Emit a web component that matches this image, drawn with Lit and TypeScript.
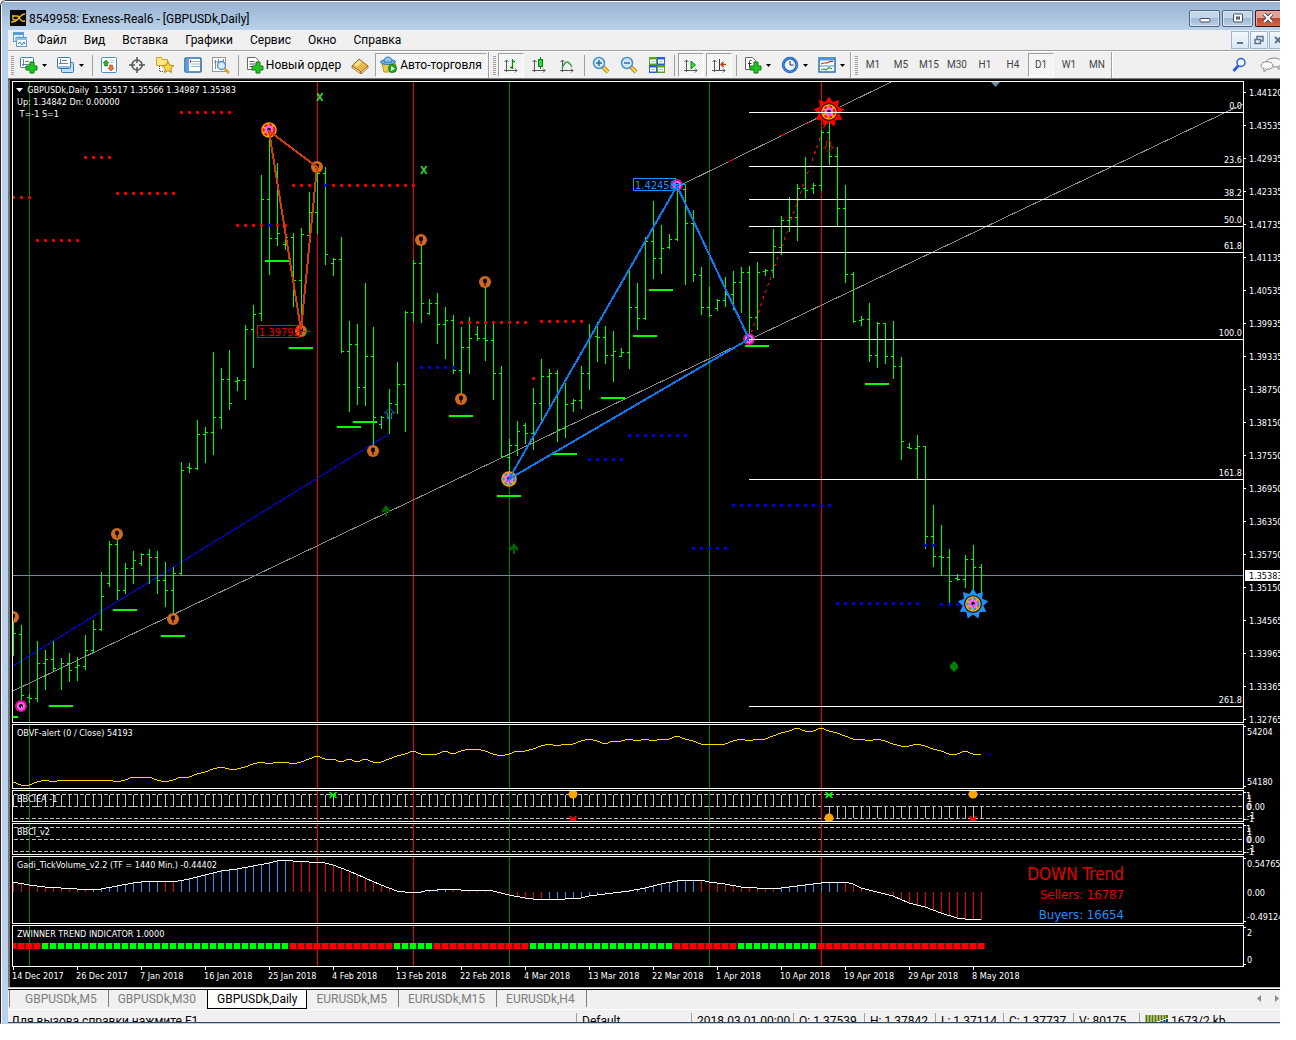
import { LitElement, html, svg, css, nothing } from "lit";
import type { SVGTemplateResult, TemplateResult } from "lit";
import { customElement, property, state } from "lit/decorators.js";
import { classMap } from "lit/directives/class-map.js";

/* Bars are 8px apart; the first one stands at x = 13 of the chart canvas. */
const barX = (k: number): number => 13 + 8 * k;

/* High, low, open, close of every daily bar, in canvas rows. */
const BARS: number[][] = [
  [618, 656, 633, 633], [625, 700, 634, 695], [694, 703, 697, 698], [641, 702, 698, 663],
  [650, 690, 663, 659], [641, 672, 659, 668], [658, 690, 668, 663], [653, 682, 663, 670],
  [657, 681, 667, 665], [635, 670, 666, 650], [620, 653, 650, 629], [572, 631, 629, 596],
  [541, 587, 583, 544], [537, 600, 544, 590], [563, 594, 590, 568], [551, 584, 568, 560],
  [553, 566, 563, 554], [549, 584, 554, 557], [551, 594, 557, 580], [562, 607, 580, 590],
  [567, 613, 590, 573], [462, 575, 573, 470], [463, 473, 467, 468], [420, 470, 468, 434],
  [427, 463, 434, 432], [352, 455, 432, 417], [368, 429, 417, 379], [350, 410, 379, 403],
  [377, 391, 381, 380], [325, 400, 380, 329], [305, 368, 329, 314], [175, 321, 313, 199],
  [130, 275, 199, 238], [163, 246, 238, 233], [238, 250, 244, 237], [233, 307, 237, 280],
  [228, 327, 280, 234], [192, 238, 235, 212], [167, 234, 212, 173], [167, 265, 173, 254],
  [258, 276, 263, 259], [237, 353, 259, 351], [321, 412, 351, 344], [324, 405, 344, 387],
  [283, 406, 387, 356], [327, 445, 356, 417], [416, 429, 424, 417], [389, 434, 417, 403],
  [362, 414, 404, 384], [311, 432, 384, 312], [260, 322, 312, 263], [242, 323, 263, 303],
  [299, 315, 313, 303], [293, 344, 303, 324], [307, 359, 324, 320], [315, 374, 320, 370],
  [327, 395, 370, 347], [317, 374, 347, 338], [326, 341, 334, 338], [283, 361, 338, 340],
  [323, 400, 340, 373], [366, 457, 373, 456], [439, 475, 457, 445], [421, 456, 445, 431],
  [423, 444, 425, 433], [388, 450, 433, 403], [359, 422, 403, 376], [369, 406, 376, 373],
  [370, 442, 373, 429], [383, 438, 428, 404], [399, 412, 403, 400], [366, 409, 400, 373],
  [324, 390, 373, 336], [322, 362, 336, 337], [326, 364, 337, 355], [331, 382, 355, 351],
  [348, 357, 356, 352], [270, 369, 352, 307], [283, 330, 307, 318], [237, 320, 318, 241],
  [201, 279, 241, 258], [225, 274, 258, 248], [234, 249, 247, 239], [187, 241, 239, 189],
  [185, 285, 189, 223], [210, 282, 223, 274], [267, 315, 275, 307], [287, 317, 307, 315],
  [299, 311, 308, 300], [277, 307, 300, 294], [271, 310, 294, 282], [267, 313, 282, 272],
  [266, 337, 272, 317], [262, 330, 317, 272], [269, 276, 271, 270], [229, 278, 270, 246],
  [216, 255, 247, 220], [197, 232, 220, 217], [184, 241, 217, 188], [157, 199, 188, 190],
  [183, 194, 188, 185], [130, 191, 185, 132], [112, 165, 132, 156], [147, 226, 156, 208],
  [185, 283, 208, 274], [272, 323, 274, 321], [316, 326, 320, 319], [303, 362, 319, 355],
  [322, 368, 355, 323], [323, 364, 323, 356], [321, 379, 356, 366], [357, 460, 366, 441],
  [443, 449, 447, 448], [435, 479, 448, 446], [446, 549, 446, 536], [505, 567, 536, 556],
  [525, 576, 556, 557], [549, 603, 557, 581], [574, 581, 578, 579], [555, 588, 579, 559],
  [545, 597, 559, 567], [564, 593, 567, 575],
];

const barsPath = BARS.map(([hi, lo, open, close], k) => {
  const x = barX(k);
  return `M${x} ${hi}h1v${lo - hi}h-1zM${x - 2} ${open}h2v1h-2zM${x + 1} ${close}h2v1h-2z`;
}).join("");

/* Vertical period separators: canvas x and colour. */
const PERIODS: [number, string][] = [
  [29, "#008000"], [317, "#f00000"], [413, "#f00000"],
  [509, "#008000"], [709, "#008000"], [821, "#f00000"],
];

const FIB: [string, number][] = [
  ["0.0", 112], ["23.6", 166], ["38.2", 199], ["50.0", 226],
  ["61.8", 252], ["100.0", 339], ["161.8", 479], ["261.8", 706],
];

/* Runs of level dots: first x, last x, y, colour. */
const DOTS: [number, number, number, string][] = [
  [13, 29, 197, "red"], [85, 109, 157, "red"], [117, 173, 193, "red"], [37, 77, 240, "red"],
  [181, 229, 112, "red"], [237, 261, 225, "red"], [269, 269, 225, "blue"], [277, 285, 225, "red"],
  [293, 309, 185, "red"], [325, 325, 185, "blue"], [333, 413, 185, "red"], [461, 525, 322, "red"],
  [541, 581, 321, "red"], [533, 533, 378, "red"], [421, 453, 367, "blue"], [629, 685, 435, "blue"],
  [589, 621, 459, "blue"], [693, 725, 548, "blue"], [733, 829, 505, "blue"], [837, 917, 603, "blue"],
  [941, 965, 604, "blue"], [925, 933, 545, "blue"],
];

const DASHES: [number, number][] = [
  [265, 260], [289, 347], [337, 426], [353, 421], [113, 609], [161, 635], [49, 705], [449, 415],
  [633, 335], [649, 289], [601, 397], [553, 453], [745, 345], [865, 383], [497, 495], [-7, 716],
];

const PRICES = [
  "1.44120", "1.43535", "1.42935", "1.42335", "1.41735", "1.41135", "1.40535", "1.39935", "1.39335",
  "1.38750", "1.38150", "1.37550", "1.36950", "1.36350", "1.35750", "1.35150", "1.34565", "1.33965",
  "1.33365", "1.32765",
];

const DATES = [
  "14 Dec 2017", "26 Dec 2017", "7 Jan 2018", "16 Jan 2018", "25 Jan 2018", "4 Feb 2018",
  "13 Feb 2018", "22 Feb 2018", "4 Mar 2018", "13 Mar 2018", "22 Mar 2018", "1 Apr 2018",
  "10 Apr 2018", "19 Apr 2018", "29 Apr 2018", "8 May 2018",
];

/* On-balance volume, one canvas row per bar. */
const OBV = [
  782, 785, 785, 782, 780, 782, 780, 780, 780, 780, 780, 780, 780, 782, 780, 777, 777, 777, 780, 782,
  780, 777, 777, 774, 772, 769, 767, 769, 769, 767, 764, 762, 764, 762, 762, 764, 762, 759, 756, 759,
  759, 762, 759, 762, 759, 762, 762, 759, 756, 754, 751, 754, 754, 754, 751, 754, 751, 749, 749, 751,
  754, 756, 754, 751, 751, 749, 746, 744, 746, 744, 744, 741, 739, 741, 744, 741, 741, 739, 741, 739,
  741, 739, 739, 736, 739, 741, 744, 744, 744, 744, 741, 739, 741, 739, 739, 736, 733, 731, 728, 731,
  731, 728, 731, 733, 736, 739, 739, 741, 739, 741, 744, 746, 746, 744, 746, 749, 751, 754, 754, 751,
  754, 754,
];

/* Knots of the tick volume curve; rows between knots are interpolated. */
const TICK: [number, number][] = [
  [13, 882], [29, 885], [45, 887], [61, 888], [77, 889], [101, 889], [117, 886], [133, 883], [149, 881],
  [165, 881], [173, 882], [189, 879], [205, 875], [221, 871], [237, 869], [253, 866], [269, 863],
  [277, 861], [285, 860], [293, 861], [309, 862], [321, 862], [333, 865], [349, 871], [365, 878],
  [381, 885], [389, 888], [397, 891], [405, 892], [421, 892], [429, 890], [437, 890], [445, 889],
  [453, 889], [461, 890], [485, 890], [493, 891], [501, 893], [509, 895], [525, 898], [533, 899],
  [565, 899], [581, 898], [589, 896], [605, 894], [621, 892], [629, 891], [645, 888], [661, 884],
  [677, 881], [685, 880], [701, 880], [709, 882], [725, 884], [741, 887], [757, 888], [781, 888],
  [789, 887], [805, 885], [821, 883], [829, 882], [845, 882], [853, 884], [861, 888], [869, 890],
  [877, 892], [893, 896], [909, 903], [925, 907], [941, 913], [957, 918], [965, 919], [973, 919],
  [981, 920],
];

const tickAt = (x: number): number => {
  for (let i = 1; i < TICK.length; i++) {
    const [x0, y0] = TICK[i - 1];
    const [x1, y1] = TICK[i];
    if (x <= x1) return Math.round(y0 + ((y1 - y0) * (x - x0)) / (x1 - x0));
  }
  return 892;
};

const BUY_RANGES = [[93, 157], [181, 285], [421, 445], [549, 693], [781, 837]];
const UP_RANGES = [[45, 285], [397, 429], [533, 669], [741, 813]];
const inside = (ranges: number[][], x: number): boolean => ranges.some(([a, b]) => x >= a && x <= b);

const pointer = (x: number, y: number) => svg`
  <g>
    <circle cx=${x} cy=${y} r="6" fill="#d2691e"></circle>
    <ellipse cx=${x} cy=${y - 1} rx="2" ry="2.4" fill="#000"></ellipse>
    <path d="M${x - 0.5} ${y}h1v4h-1z" fill="#000"></path>
  </g>`;

const magenta = (x: number, y: number) => svg`
  <g>
    <circle cx=${x} cy=${y} r="6" fill="#c71585"></circle>
    <circle cx=${x} cy=${y} r="3" fill="#000" stroke="#ff5cff" stroke-width="2"></circle>
    <path d="M${x} ${y}h1v5h-1z" fill="#ff5cff"></path>
  </g>`;

const target = (x: number, y: number, accent: string) => svg`
  <g>
    <circle cx=${x} cy=${y} r="7.800" fill="#ffa500"></circle>
    <circle cx=${x} cy=${y} r="5.400" fill="none" stroke=${accent} stroke-width="2" stroke-dasharray="3 2"></circle>
    <circle cx=${x} cy=${y - 0.5} r="3" fill="#000" stroke="#ff5cff" stroke-width="2.400"></circle>
    <path d="M${x} ${y}h1v4h-1z" fill="#7060ff"></path>
  </g>`;

const sun = (x: number, y: number, color: string) => {
  const pts: string[] = [];
  for (let i = 0; i < 18; i++) {
    const r = i % 2 ? 10.5 : 15.5;
    const a = (i * Math.PI) / 9 - Math.PI / 2;
    pts.push(`${(x + r * Math.cos(a)).toFixed(1)},${(y + r * Math.sin(a)).toFixed(1)}`);
  }
  return svg`
    <polygon points=${pts.join(" ")} fill=${color}></polygon>
    <circle cx=${x} cy=${y} r="8.800" fill="#000"></circle>
    ${target(x, y, color)}`;
};

const periodLines = (top: number, height: number) =>
  PERIODS.map(([x, color]) => svg`<rect x=${x} y=${top} width="1" height=${height} fill=${color}></rect>`);

const priceMarks = () => svg`
  ${periodLines(82, 640)}
  <g class="crisp">
    <path d="M13 691L1243 104M677 187L891 82" stroke="#8c8c8c" fill="none"></path>
    <path d="M13 666L389 434" stroke="#0000ff" fill="none"></path>
    <path d="M749 339L829 113" stroke="#ff0000" stroke-dasharray="3 4" fill="none"></path>
    <path d="M728 162l6 -3M780 136l5 -2M806 124l4 -2" stroke="#ff0000" fill="none"></path>
    <rect x="13" y="575" width="100%" height="1" fill="#778899"></rect>
    <path d=${barsPath} fill="#00ff00"></path>
  </g>
  ${DOTS.map(([from, to, y, color]) => {
    const out: SVGTemplateResult[] = [];
    for (let x = from; x <= to; x += 8) {
      out.push(svg`<rect x=${x - 1} y=${y - 1} width="3" height="3" rx="1" fill=${color}></rect>`);
    }
    return out;
  })}
  ${DASHES.map(([x, y]) => svg`<rect x=${x} y=${y} width=${x < 0 ? 25 : 24} height="2" fill="#00ff00"></rect>`)}
  ${[[13, 617], [117, 534], [173, 619], [317, 167], [301, 331], [373, 451], [421, 240], [461, 399], [485, 282]]
    .map(([x, y]) => pointer(x, y))}
  ${[[21, 706], [677, 185], [749, 339]].map(([x, y]) => magenta(x, y))}
  ${target(269, 130, "#ff0000")}
  ${target(509, 479, "#1e90ff")}
  ${sun(829, 112, "#ff0000")}
  ${sun(973, 604, "#1e90ff")}
  <text x="259" y="336" class="tag" fill="#ee0000">1.39792</text>
  <rect x="257.5" y="325.5" width="42" height="12" fill="none" stroke="#ff0000"></rect>
  <path d="M300 331.5h10" stroke="#ff0000"></path>
  <text x="635" y="189" class="tag" fill="#1e90ff">1.42458</text>
  <rect x="633.5" y="178.5" width="42" height="12" fill="none" stroke="#1e90ff"></rect>
  <path d="M676 184.5h10" stroke="#1e90ff"></path>
  <g class="crisp" fill="none" stroke-width="2">
    <path d="M269 131L317 167L301 330Z" stroke="#d23c08"></path>
    <path d="M509 479L677 186L749 339Z" stroke="#0a78ee"></path>
  </g>
  <g font-size="11" font-weight="bold" fill="#32cd32">
    <text x="316" y="101">X</text>
    <text x="420" y="174">X</text>
  </g>
  <path d="M389.500 408l5 5h-3v6h-4v-6h-3z" fill="none" stroke="#1473d8"></path>
  <path d="M826.500 141h4v6h3l-5 5l-5 -5h3z" fill="none" stroke="#c00000"></path>
  ${[[386, 505], [514, 543]].map(([x, y]) => svg`
    <path d="M${x} ${y}l4 5v3l-3 -2v5h-2v-5l-3 2v-3z" fill="#006400"></path>`)}
  <path d="M954 661l4 4v3l-4 4l-4 -4v-3z" fill="#008000"></path>
  <path d="M991 82h9l-4.500 5z" fill="#778899"></path>
  ${FIB.map(([, y]) => svg`<rect x="749" y=${y} width="100%" height="1" fill="#fff"></rect>`)}
  <path d="M16 88h7l-3.500 4z" fill="#fff"></path>`;

const cross = (x: number, y: number, color: string) => svg`
  <path d="M${x - 3.5} ${y - 3}l7 6M${x + 3.5} ${y - 3}l-7 6M${x - 3} ${y}h6" stroke=${color} stroke-width="1.600" fill="none"></path>`;

const dashedRow = (y: number) => svg`
  <path d="M14 ${y}.5H3000" stroke="#c0c0c0" stroke-dasharray="4 2"></path>`;

const signalMarks = () => svg`
  ${dashedRow(794)}${dashedRow(806)}${dashedRow(818)}
  ${BARS.map((_, k) => svg`
    <rect x=${barX(k)} y=${k < 102 ? 795 : 807} width="1" height="11" fill="#c0c0c0"></rect>
    <rect x=${barX(k) - 1} y="806" width="2" height="1" fill="#c0c0c0"></rect>`)}
  ${periodLines(791, 30)}
  ${[[573, 794], [829, 818], [973, 794]].map(([x, y]) => svg`<circle cx=${x} cy=${y} r="4.500" fill="#ffa500"></circle>`)}
  ${cross(333, 795, "#00ff00")}${cross(829, 795, "#00ff00")}
  ${cross(573, 819, "#ff0000")}${cross(973, 819, "#ff0000")}`;

const tickMarks = () => svg`
  ${periodLines(857, 66)}
  ${BARS.map((_, k) => {
    const x = barX(k);
    const y = tickAt(x);
    return svg`<rect x=${x} y=${Math.min(y, 892)} width="1" height=${Math.max(1, Math.abs(892 - y))}
      fill=${inside(BUY_RANGES, x) ? "#1e90ff" : "#f00000"}></rect>`;
  })}
  <polyline class="crisp" points=${TICK.map((p) => p.join(",")).join(" ")} fill="none" stroke="#ffffff"></polyline>`;

const trendMarks = () => svg`
  ${periodLines(926, 40)}
  ${BARS.map((_, k) => {
    const x = barX(k);
    const up = inside(UP_RANGES, x);
    return svg`
      <rect x=${x - 4} y="943" width="8" height="6" fill=${up ? "#003800" : "#800000"}></rect>
      <rect x=${x - 3} y="943" width="6" height="6" fill=${up ? "#00ff00" : "#ff0000"}></rect>`;
  })}`;

interface AxisLabel { text: string; y: number; x?: number; tick?: boolean; }

interface PanelData {
  name: string;
  top: number;
  height: number;
  title: string[];
  marks: () => unknown;
  axis: AxisLabel[];
}

const signalAxis = (mid: number): AxisLabel[] => [
  { text: "1", y: mid - 11, x: 2, tick: true }, { text: "1", y: mid - 8, x: 3 },
  { text: "0.00", y: mid, x: 3 }, { text: "0", y: mid, x: 2 },
  { text: "-1", y: mid + 9, x: 3 }, { text: "-1", y: mid + 12, x: 2, tick: true },
];

const PANELS: PanelData[] = [
  {
    name: "GBPUSDk,Daily", top: 82, height: 640,
    title: ["    GBPUSDk,Daily  1.35517 1.35566 1.34987 1.35383", "Up: 1.34842 Dn: 0.00000", " T=-1 S=1"],
    marks: priceMarks,
    axis: PRICES.map((text, i) => ({ text, y: 92 + 33 * i, tick: true })),
  },
  {
    name: "OBVF-alert", top: 725, height: 63, title: ["OBVF-alert (0 / Close) 54193"],
    marks: () => svg`${periodLines(725, 63)}
      <polyline class="crisp" fill="none" stroke="#ffd700" points=${OBV.map((y, k) => `${barX(k)},${y}`).join(" ")}></polyline>`,
    axis: [{ text: "54204", y: 731, x: 3, tick: true }, { text: "54180", y: 781, x: 3, tick: true }],
  },
  { name: "BBCIEA", top: 791, height: 30, title: ["BBCIEA -1"], marks: signalMarks, axis: signalAxis(806) },
  {
    name: "BBCI_v2", top: 824, height: 30, title: ["BBCI_v2"],
    marks: () => svg`${dashedRow(827)}${dashedRow(839)}${dashedRow(851)}${periodLines(824, 30)}`,
    axis: signalAxis(839),
  },
  {
    name: "Gadi_TickVolume", top: 857, height: 66, title: ["Gadi_TickVolume_v2.2 (TF = 1440 Min.) -0.44402"],
    marks: tickMarks,
    axis: [{ text: "0.54765", y: 863, x: 3, tick: true }, { text: "0.00", y: 892, x: 3 }, { text: "-0.49124", y: 916, x: 3, tick: true }],
  },
  {
    name: "ZWINNER", top: 926, height: 40, title: ["ZWINNER TREND INDICATOR 1.0000"], marks: trendMarks,
    axis: [{ text: "2", y: 932, x: 3, tick: true }, { text: "0", y: 959, x: 3, tick: true }],
  },
];

@customElement("chart-panel")
export class ChartPanel extends LitElement {
  @property({ attribute: false }) data!: PanelData;

  static styles = css`
    :host { display: flex; font: 9px/12px "DejaVu Sans Condensed", "DejaVu Sans", sans-serif; color: #fff; }
    .plot { position: relative; flex: 1; min-width: 0; border: 1px solid #fff; }
    svg { display: block; }
    .canvas { width: 100%; overflow: hidden; }
    .crisp { shape-rendering: crispEdges; }
    .tag { font-size: 11px; }
    .axis { flex: none; width: 36px; fill: #fff; }
    .title { position: absolute; left: 4px; top: 2px; white-space: pre; }
    .fib { position: absolute; right: 1px; line-height: 10px; }
    .trend { position: absolute; right: 119px; top: 6px; text-align: right; color: #e60000; }
    .trend-main { font: 17px/22px "DejaVu Sans Condensed", sans-serif; }
    .trend-row { font: 13px/20px "DejaVu Sans Condensed", sans-serif; }
    .buy { color: #1e90ff; }
  `;

  render() {
    const { name, top, height, title, marks, axis } = this.data;
    const main = top === 82;
    return html`
      <div class="plot">
        <svg class="canvas" height=${height} role="img" aria-label=${name}>
          <g transform="translate(-13 ${-top})">${marks()}</g>
        </svg>
        <div class="title">${title.map((line) => html`<div>${line}</div>`)}</div>
        ${main ? FIB.map(([label, y]) => html`<span class="fib" style="top:${y - top - 11}px">${label}</span>`) : nothing}
        ${name === "Gadi_TickVolume" ? html`
          <div class="trend">
            <div class="trend-main">DOWN Trend</div>
            <div class="trend-row">Sellers: 16787</div>
            <div class="trend-row buy">Buyers: 16654</div>
          </div>` : nothing}
      </div>
      <svg class="axis" height=${height + 2} overflow="visible">
        <g transform="translate(0 ${1 - top})">
          ${axis.map((a, i) => svg`
            ${a.tick ? svg`<rect x="0" y=${main ? a.y : i === 0 ? top + 1 : top + height - 2} width="2" height="1"></rect>` : nothing}
            <text x=${a.x ?? 5} y=${a.y + 4}>${a.text}</text>`)}
          ${main ? svg`
            <rect x="1" y="570" width="35" height="11" fill="#fff"></rect>
            <text x="5" y="579" fill="#000">1.35383</text>` : nothing}
        </g>
      </svg>`;
  }
}

/* ---- Toolbar pictures, each on an 18px grid ---- */
const pic = (body: SVGTemplateResult): TemplateResult =>
  html`<svg width="18" height="18" viewBox="0 0 18 18" aria-hidden="true">${body}</svg>`;

const plus = svg`<path d="M10 6h4v4h3v4h-3v3h-4v-3h-4v-4h4z" fill="#22c522" stroke="#0c7d10"></path>`;
const axes = svg`<path d="M4.500 4v12M2 14.500h13M2.500 6l2 -2l2 2M13 12.500l2 2l-2 2" fill="none" stroke="#555"></path>`;
const handle = svg`<path d="M11 11l5 5" stroke="#b8860b" stroke-width="4"></path><path d="M11 11l5 5" stroke="#ffd75e" stroke-width="2"></path>`;
const lens = svg`<circle cx="7" cy="7" r="5.500" fill="#cfe8fb" stroke="#4a90c8" stroke-width="1.500"></circle>`;

const ICONS: Record<string, TemplateResult> = {
  newChart: pic(svg`<rect x=".5" y="1.500" width="13" height="10" rx="1" fill="#fff" stroke="#3b7dad"></rect>
    <path d="M3.500 3v7M2 8.500h8M5 5.500h4" stroke="#708090"></path>${plus}`),
  profiles: pic(svg`<rect x="4.500" y="6.500" width="12" height="10" rx="1" fill="#bfe0f6" stroke="#3b7dad"></rect>
    <rect x=".5" y="1.500" width="13" height="11" rx="1" fill="#fff" stroke="#3b7dad"></rect><path d="M1 11h12" stroke="#8fc1e4" stroke-width="2"></path>
    <path d="M3.500 3v5M2 7.500h9M5 4.500h5" stroke="#708090"></path>`),
  market: pic(svg`<rect x="1.500" y="1.500" width="15" height="15" rx="1" fill="#fff" stroke="#4a90c8"></rect>
    <path d="M6 4l3 3h-1.500v3h-3v-3h-1.500z" fill="#2fae2f" stroke="#0c7d10" stroke-width=".6"></path>
    <path d="M11 15l-3 -3h1.500v-3h3v3h1.500z" fill="#f07040" stroke="#c03a10" stroke-width=".6"></path><path d="M10 4.500h4M10 6.500h4" stroke="#bcd"></path>`),
  crosshair: pic(svg`<circle cx="9" cy="9" r="5" fill="none" stroke="#555" stroke-width="1.500"></circle>
    <path d="M9 1v6M9 11v6M1 9h6M11 9h6" stroke="#555" stroke-width="1.500"></path>`),
  navigator: pic(svg`<path d="M.5 1.500h5l1 2h5v6h-11z" fill="#fbe58a" stroke="#c9a227"></path><path d="M3.500 10v5.500h4" fill="none" stroke="#555" stroke-dasharray="1 1"></path>
    <path d="M12 5.500l1.800 3.700l4 .5l-3 2.800l.8 4l-3.600 -2l-3.600 2l.8 -4l-3 -2.800l4 -.5z" fill="#ffd84a" stroke="#b8860b"></path>`),
  terminal: pic(svg`<rect x="1" y="2" width="16" height="14" rx="1" fill="#fff" stroke="#2a6fb0" stroke-width="1.600"></rect>
    <rect x="2" y="3" width="3" height="12" fill="#5ba3e0"></rect><path d="M7 5.500h9M7 8h9M7 10.500h9" stroke="#a0b8cc"></path><path d="M6.500 4v3" stroke="#e03030"></path>`),
  tester: pic(svg`<rect x=".5" y="1.500" width="13" height="14" fill="#fff" stroke="#999"></rect><path d="M3.500 4v9M6.500 3v5M11.500 3v5M2 6h10" stroke="#888"></path>
    <circle cx="9.500" cy="9.500" r="4" fill="#cfe8fb" fill-opacity=".85" stroke="#4a90c8" stroke-width="1.300"></circle><path d="M12.500 12.500l4.500 4.500" stroke="#d8a72a" stroke-width="2.500"></path>`),
  order: pic(svg`<path d="M1.500 1.500h8l3 3v9h-11z" fill="#fff" stroke="#666"></path><path d="M3.500 5.500h5M3.500 8h6M3.500 10.500h4" stroke="#555"></path>${plus}`),
  book: pic(svg`<path d="M1 10l7 -7l9 7l-7 6z" fill="#e9b84a" stroke="#96640f"></path><path d="M1 10v2l9 6v-2zM10 16v2l7 -6v-2z" fill="#fff0c4" stroke="#96640f" stroke-width=".8"></path><path d="M3 9l5 -5l3 2l-5 5z" fill="#ffdf8c"></path>`),
  auto: pic(svg`<path d="M2 8l2 8h8l4 -8z" fill="#f0c94c" stroke="#b8922a"></path><ellipse cx="8" cy="6" rx="7.500" ry="2.500" fill="#6cb3e6" stroke="#2f78b5"></ellipse>
    <path d="M4 6q0 -5 4 -5t4 5z" fill="#8ec9f2" stroke="#2f78b5"></path><circle cx="12.500" cy="12.500" r="4" fill="#16b316" stroke="#0a7f0a"></circle><path d="M11 10l4 2.500l-4 2.500z" fill="#fff"></path>`),
  bars: pic(svg`${axes}<path d="M10.500 3v10M8 11.500h2M11 5.500h2" stroke="#0a8a0a" stroke-width="1.300"></path>`),
  candles: pic(svg`${axes}<path d="M10.500 1v12" stroke="#0a8a0a"></path><rect x="8.500" y="3.500" width="4" height="7" fill="#35d048" stroke="#0a8a0a"></rect>`),
  line: pic(svg`${axes}<path d="M4 12q3 -6 5 -6q2 0 5 5" fill="none" stroke="#2ea043" stroke-width="1.400"></path>`),
  zoomIn: pic(svg`${handle}${lens}<path d="M4 7h6M7 4v6" stroke="#2a6fb0" stroke-width="1.500"></path>`),
  zoomOut: pic(svg`${handle}${lens}<path d="M4 7h6" stroke="#2a6fb0" stroke-width="1.500"></path>`),
  tile: pic(svg`<rect x="1" y="1" width="8" height="8" fill="#58a618"></rect><rect x="9" y="1" width="8" height="8" fill="#2a5fd8"></rect>
    <rect x="1" y="9" width="8" height="8" fill="#2a5fd8"></rect><rect x="9" y="9" width="8" height="8" fill="#58a618"></rect>
    <path d="M2 5.500h6M10 5.500h6M2 13.500h6M10 13.500h6" stroke="#fff" stroke-width="4"></path><path d="M3 5.500h4M11 5.500h4M3 13.500h4M11 13.500h4" stroke="#9cc"></path>`),
  scroll: pic(svg`${axes}<path d="M9 5l4.500 4l-4.500 4z" fill="#3ed14f" stroke="#0a8a0a"></path>`),
  shift: pic(svg`${axes}<path d="M9.500 3v11" stroke="#336"></path><path d="M16 8.500h-4M13.500 6l-2.500 2.500l2.500 2.500" fill="none" stroke="#c03a10" stroke-width="1.400"></path>`),
  indicators: pic(svg`<path d="M1.500 1.500h7l3 3v9h-10z" fill="#fff" stroke="#666"></path><path d="M7.500 4.500q-2 -1 -2 1v6M4 7.500h3.500" fill="none" stroke="#333"></path>${plus}`),
  clock: pic(svg`<circle cx="9" cy="9" r="6.800" fill="#e8f3fd" stroke="#1a5fb8" stroke-width="2.800"></circle><circle cx="9" cy="9" r="7" fill="none" stroke="#5aa8f0" stroke-width=".8"></circle><path d="M9 5v4h3.500" fill="none" stroke="#333"></path>`),
  template: pic(svg`<rect x="1" y="2" width="16" height="14" fill="#fff" stroke="#2a6fb0" stroke-width="1.500"></rect><path d="M1 3.500h16" stroke="#4a9ae0" stroke-width="2"></path>
    <path d="M2 10h14" stroke="#4a90c8"></path><path d="M3 8l3 -1l3 0l3 -1.500h3" fill="none" stroke="#b03020" stroke-width="1.200"></path><path d="M3 14l3 -1l2 1l3 -2.500l3 1.500" fill="none" stroke="#2f9a3a" stroke-width="1.200"></path>`),
};

const arrow = html`<svg width="5" height="3" viewBox="0 0 5 3" aria-hidden="true"><path d="M0 0h5l-2.500 3z" fill="#000"></path></svg>`;

const MENU = ["Файл", "Вид", "Вставка", "Графики", "Сервис", "Окно", "Справка"];
const PERIOD_NAMES = ["M1", "M5", "M15", "M30", "H1", "H4", "D1", "W1", "MN"];
const TABS = ["GBPUSDk,M5", "GBPUSDk,M30", "GBPUSDk,Daily", "EURUSDk,M5", "EURUSDk,M15", "EURUSDk,H4"];
const STATUS = ["Default", "2018.03.01 00:00", "O: 1.37539", "H: 1.37842", "L: 1.37114", "C: 1.37737", "V: 80175"];

@customElement("app-root")
export class AppRoot extends LitElement {
  @state() private period = "D1";
  @state() private tab = "GBPUSDk,Daily";

  static styles = css`
    :host { display: block; padding: 0 16px 16px 0; background: #fff; font: 12px/16px Roboto, "Noto Sans", sans-serif; color: #000; }
    * { box-sizing: border-box; }
    svg { display: block; flex: none; }
    button { margin: 0; padding: 0; border: 0; background: none; font: inherit; color: inherit; white-space: nowrap; }
    .window { display: flex; flex-direction: column; overflow: hidden; border-top: 1px solid #35343c; border-left: 1px solid #222; border-top-left-radius: 6px; background: #b9d1ea; border-bottom: 1px solid #b9d1ea; }
    .titlebar { display: flex; align-items: center; height: 29px; padding: 4px 0 0 8px; gap: 3px; border-top: 1px solid #fff; border-left: 1px solid #fff; background: linear-gradient(#98b3d2, #b9d1ea); }
    .caption { flex: 1; padding-top: 2px; }
    .caption-buttons { display: flex; gap: 2px; }
    .cap { display: grid; place-items: center; width: 31px; height: 17px; border: 1px solid #52657c; border-radius: 2px; box-shadow: inset 0 0 0 1px #d8e6f4; background: linear-gradient(#c3d6ea 45%, #a0bad6 50%, #b9d0e8); }
    .cap.close { width: 25px; border-color: #431422; border-right: 0; border-radius: 2px 0 0 2px; box-shadow: inset 1px 1px 0 #eda99b; background: linear-gradient(#e3a193 45%, #c0452c 50%, #cf6a4a); }
    .body { display: flex; flex-direction: column; margin-left: 6px; background: #f0f0f0; border-bottom: 1px solid #3d4a57; }
    .frame { border-left: 1px solid #fff; }
    .menubar { display: flex; align-items: center; gap: 1px; height: 21px; padding-left: 4px; border-bottom: 1px solid #a0a0a0; }
    .menubar .menu { padding: 0 8px; }
    .mdi { display: flex; gap: 1px; margin-left: auto; }
    .mdi-button { display: grid; place-items: center; width: 18px; height: 18px; border: 1px solid #9fb6cc; background: linear-gradient(#f2f8fd, #d8e8f5); }
    .mdi-button.last { width: 11px; border-right: 0; overflow: hidden; justify-items: end; }
    .toolbar { display: flex; align-items: center; height: 28px; padding-left: 3px; border-top: 1px solid #fff; border-bottom: 1px solid #808080; }
    .grip { width: 3px; height: 19px; margin-right: 1px; background: repeating-linear-gradient(#a0a0a0 0 1px, #f0f0f0 1px 2px); }
    .tool { display: flex; flex: none; align-items: center; justify-content: center; width: 28px; height: 24px; }
    .tool.split { width: 37px; gap: 4px; }
    .tool.label { width: auto; gap: 2px; padding: 0 4px; }
    .tool.order { width: 105px; }
    .tool.auto { width: 112px; margin: 0 1px; }
    .tool.pressed { border: 1px solid; border-color: #a0a0a0 #fff #fff #a0a0a0; background: repeating-conic-gradient(#fff 0 25%, #ececec 0 50%) 0 0 / 2px 2px; }
    .tool.icon.pressed, .tool.period.pressed { width: 26px; margin: 0 1px; }
    .period { font-size: 10px; color: #444; }
    .sep { flex: none; width: 1px; height: 21px; margin: 0 2px 0 3px; background: #a0a0a0; }
    .edge { flex: none; width: 2px; height: 26px; margin-right: 3px; border-left: 1px solid #a0a0a0; background: #fff; }
    .right-tools { display: flex; gap: 12px; margin-left: auto; }
    .workspace { padding: 1px 0 0 2px; border-top: 1px solid #222; border-left: 2px solid #747474; background: #000; }
    .panels { display: flex; flex-direction: column; gap: 1px; }
    .dates { width: 100%; height: 20px; overflow: hidden; fill: #fff; font: 9px "DejaVu Sans Condensed", "DejaVu Sans", sans-serif; }
    .tabs { display: flex; height: 23px; padding-left: 1px; border-top: 1px solid #bfb6bd; box-shadow: inset 0 1px #fff, inset 0 2px #000; background: #f0f0f0; border-bottom: 1px solid #fff; }
    .tab { display: flex; align-items: center; margin-top: 2px; height: 17px; color: #7c7c7c; padding: 0 11px 0 9px; border-right: 1px solid #7c7c7c; }
    .tab.first { padding-left: 15px; border-left: 1px solid #7c7c7c; }
    .tab.before { border-right: 0; }
    .tab.active { height: 19px; padding: 0 9px; border: 1px solid #000; border-top: 0; background: #fff; color: #000; }
    .scrollers { display: flex; align-items: center; gap: 14px; margin: 0 1px 0 auto; }
    .status { display: grid; grid-template-columns: minmax(0, 1fr) 115px 102px 71px 71px 68px 70px 66px 141px; height: 12px; overflow: hidden; padding-top: 3px; }
    .cell { display: flex; gap: 3px; height: 16px; padding-left: 5px; border-left: 1px solid #a0a0a0; white-space: nowrap; }
    .cell.hint { padding-left: 3px; border-left: 0; }
  `;

  private icon(name: string, label: string, kind = "icon", pressed = false) {
    return html`<button class=${classMap({ tool: true, [kind]: true, pressed })} aria-label=${label}>
      ${ICONS[name]}${kind === "split" ? arrow : nothing}</button>`;
  }

  private titlebar() {
    return html`
      <header class="titlebar">
        <svg width="16" height="16" viewBox="0 0 16 16" aria-hidden="true"><rect width="16" height="16" fill="#0a0a0a"></rect>
          <path d="M1 12q5 0 8 -4t6 -4M4 5q-3 5 1 5q3 0 5 -4M2 6h5q2 0 3 3t5 2" fill="none" stroke="#e8b418" stroke-width="1.300"></path></svg>
        <span class="caption">8549958: Exness-Real6 - [GBPUSDk,Daily]</span>
        <div class="caption-buttons">
          <button class="cap" aria-label="Свернуть"><svg width="12" height="10"><rect x="1" y="5.500" width="10" height="3.500" rx="1" fill="#fff" stroke="#444c5c"></rect></svg></button>
          <button class="cap" aria-label="Развернуть"><svg width="12" height="10"><rect x="1.500" y="1" width="9" height="8" rx="1" fill="#fff" stroke="#444c5c"></rect><rect x="4.500" y="4" width="3" height="2" fill="#88a" stroke="#444c5c"></rect></svg></button>
          <button class="cap close" aria-label="Закрыть"><svg width="12" height="10"><path d="M2 1l8 8M10 1l-8 8" stroke="#444c5c" stroke-width="4"></path><path d="M2 1l8 8M10 1l-8 8" stroke="#fff" stroke-width="2"></path></svg></button>
        </div>
      </header>`;
  }

  private menubar() {
    return html`
      <nav class="menubar">
        <svg width="16" height="16" viewBox="0 0 16 16" aria-hidden="true">
          <rect x="1.500" y=".5" width="10" height="9" fill="#e4f1fc" stroke="#5b9bd0"></rect><path d="M1 2h11" stroke="#5b9bd0" stroke-width="2"></path>
          <path d="M4 5v4M7 4v4" stroke="#5b9bd0"></path>
          <rect x="4.500" y="5.500" width="10" height="9" fill="#f4faff" stroke="#5b9bd0"></rect><path d="M4 7h11" stroke="#8fc1e4" stroke-width="2"></path>
          <path d="M6 12l2 -2l2 3l2 -3l1 2" fill="none" stroke="#3b7dad"></path></svg>
        ${MENU.map((m) => html`<button class="menu">${m}</button>`)}
        <div class="mdi">
          <button class="mdi-button" aria-label="Свернуть график"><svg width="10" height="10"><path d="M2 8h6" stroke="#5a738c" stroke-width="2"></path></svg></button>
          <button class="mdi-button" aria-label="Восстановить график"><svg width="10" height="10"><path d="M3 4V1.500h6V6H7" fill="none" stroke="#5a738c" stroke-width="1.500"></path><rect x="1" y="4.500" width="5.500" height="4" fill="none" stroke="#5a738c" stroke-width="1.500"></rect></svg></button>
          <button class="mdi-button last" aria-label="Закрыть график"><svg width="6" height="10"><path d="M1 2l6 6M7 2l-6 6" stroke="#5a738c" stroke-width="2"></path></svg></button>
        </div>
      </nav>`;
  }

  private toolbar() {
    const sep = html`<span class="sep"></span>`;
    return html`
      <div class="toolbar" role="toolbar" aria-label="Панель инструментов">
        <span class="grip"></span>
        ${this.icon("newChart", "Новый график", "split")}${this.icon("profiles", "Профили", "split")}${sep}
        ${this.icon("market", "Обзор рынка")}${this.icon("crosshair", "Окно данных")}${this.icon("navigator", "Навигатор")}
        ${this.icon("terminal", "Терминал")}${this.icon("tester", "Тестер стратегий")}${sep}
        <button class="tool label order">${ICONS.order}<span>Новый ордер</span></button>
        ${this.icon("book", "MetaEditor")}
        <button class="tool label auto pressed">${ICONS.auto}<span>Авто-торговля</span></button>
        <span class="edge"></span><span class="grip"></span>
        ${this.icon("bars", "Бары", "icon", true)}${this.icon("candles", "Японские свечи")}${this.icon("line", "Линия")}${sep}
        ${this.icon("zoomIn", "Увеличить")}${this.icon("zoomOut", "Уменьшить")}${this.icon("tile", "Окна рядом")}${sep}
        ${this.icon("scroll", "Автопрокрутка", "icon", true)}${this.icon("shift", "Сдвиг графика", "icon", true)}${sep}
        ${this.icon("indicators", "Индикаторы", "split")}${this.icon("clock", "Периоды", "split")}${this.icon("template", "Шаблоны", "split")}
        <span class="edge"></span><span class="grip"></span>
        ${PERIOD_NAMES.map((p) => html`<button class=${classMap({ tool: true, period: true, pressed: p === this.period })}
          @click=${() => (this.period = p)}>${p}</button>`)}
        <span class="edge"></span>
        <div class="right-tools">
          <button aria-label="Поиск"><svg width="16" height="16"><path d="M1.500 14l5 -5.500" stroke="#2a5fd8" stroke-width="2.800"></path><circle cx="9" cy="5.500" r="4" fill="#eef5ff" stroke="#2a5fd8" stroke-width="1.500"></circle></svg></button>
          <button aria-label="Чат"><svg width="20" height="16"><ellipse cx="14" cy="5.500" rx="8" ry="4.500" fill="#f4f4f4" stroke="#888"></ellipse><ellipse cx="7" cy="8.500" rx="6" ry="3.800" fill="#fafafa" stroke="#888"></ellipse><path d="M4 12v3l3 -3M17 9.500l2 3v-3" fill="#fff" stroke="#888"></path></svg></button>
        </div>
      </div>`;
  }

  render() {
    const activeIndex = TABS.indexOf(this.tab);
    return html`
      <main class="window">
        ${this.titlebar()}
        <div class="frame"><div class="body">
          ${this.menubar()}
          ${this.toolbar()}
          <section class="workspace">
            <div class="panels">${PANELS.map((p) => html`<chart-panel .data=${p}></chart-panel>`)}</div>
            <svg class="dates" role="img" aria-label="Ось времени">
              ${DATES.map((d, i) => svg`<rect x=${1 + 64 * i} y="0" width="1" height="3"></rect><text x=${64 * i} y="12">${d}</text>`)}
            </svg>
          </section>
          <div class="tabs">
            ${TABS.map((t, i) => html`<button
              class=${classMap({ tab: true, first: i === 0, before: i === activeIndex - 1, active: i === activeIndex })}
              @click=${() => (this.tab = t)}>${t}</button>`)}
            <div class="scrollers">
              <button aria-label="Назад"><svg width="4" height="7"><path d="M4 0v7l-4 -3.500z" fill="#8a8a8a"></path></svg></button>
              <button aria-label="Вперёд"><svg width="4" height="7"><path d="M0 0v7l4 -3.500z" fill="#8a8a8a"></path></svg></button>
            </div>
          </div>
          <footer class="status">
            <span class="cell hint">Для вызова справки нажмите F1</span>
            ${STATUS.map((s) => html`<span class="cell">${s}</span>`)}
            <span class="cell">
              <svg width="23" height="12" aria-hidden="true"><path d="M1.500 2v10M4.500 2v10M7.500 2v10M10.500 2v10M13.500 2v6M16.500 2v5M19.500 2v4M22 2v3" stroke="#5a7800" stroke-width="2"></path><path d="M13.500 9v3M16.500 8v4M19.500 7v5M22 6v6" stroke="#0a4a6e" stroke-width="2"></path></svg>
              1673/2 kb</span>
          </footer>
        </div></div>
      </main>`;
  }
}
